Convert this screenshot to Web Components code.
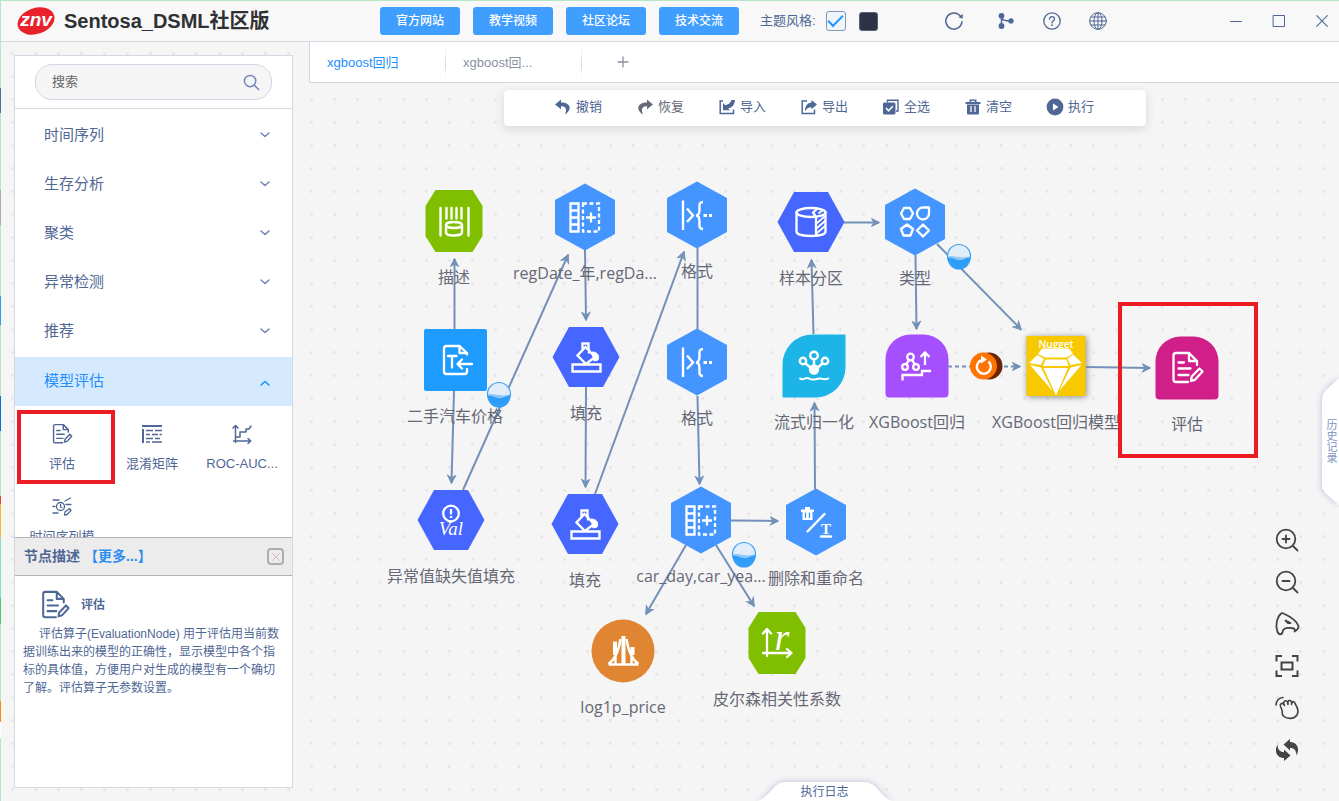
<!DOCTYPE html>
<html lang="zh-CN">
<head>
<meta charset="utf-8">
<title>Sentosa_DSML社区版</title>
<style>
html,body{margin:0;height:100%}
body{font-family:"Liberation Sans","Noto Sans CJK SC",sans-serif;color:#4f6795;overflow:hidden;
 --line:#d4d8e2;--ink:#4f6795;--blue:#1e8fff;--mark:#ec1c24}
</style>
</head>
<body>
<app-shell></app-shell>
<script>
const SW = 'fill="none" stroke="currentColor" stroke-linecap="round" stroke-linejoin="round"';
/* name: [viewBox, markup] */
const ICONS = {
  search:['0 0 18 18',`<g ${SW} stroke-width="1.6"><circle cx="7.500" cy="7.500" r="6"/><path d="M12 12l4.500 4.500"/></g>`],
  down:['0 0 12 12',`<path ${SW} stroke-width="1.600" d="M2 4L6 7.500L10 4"/>`],
  up:['0 0 12 12',`<path ${SW} stroke-width="1.600" d="M2 8L6 4.500L10 8"/>`],
  close:['0 0 12 12',`<path ${SW} stroke-width="1.1" d="M.7 .7L11.300 11.300M11.300 .7L.7 11.300"/>`],
  max:['0 0 12 12',`<path ${SW} stroke-width="1" d="M.5 .5H11.500V11.500H.5Z"/>`],
  min:['0 0 12 12',`<path ${SW} stroke-width="1" d="M.5 6.500H11.500"/>`],
  plus:['0 0 12 12',`<path ${SW} stroke-width="1.300" d="M6 1V11M1 6H11"/>`],
  refresh:['0 0 18 18',`<path ${SW} stroke-width="1.500" d="M17 9.800A8.100 8.100 0 1 1 15.600 4.400"/><path fill="currentColor" d="M17.700 1.800V6.500L13.500 5.500Z"/>`],
  branch:['0 0 18 18',`<g fill="currentColor"><circle cx="4.500" cy="3.800" r="2.900"/><circle cx="4.500" cy="14" r="2.900"/><circle cx="14" cy="8.900" r="2.600"/></g><path ${SW} stroke-width="1.500" d="M4.500 4V14M4.500 6C6 8.500 8 8.900 14 8.900"/>`],
  help:['0 0 18 18',`<g ${SW} stroke-width="1.300"><circle cx="9" cy="9" r="8.200"/><path d="M6.500 7.200C6.500 3.800 11.700 4 11.500 7.100C11.400 8.800 9 8.900 9 11"/></g><circle cx="9" cy="13.200" r=".9" fill="currentColor"/>`],
  globe:['0 0 18 18',`<g ${SW} stroke-width="1"><circle cx="9" cy="9" r="8.300"/><ellipse cx="9" cy="9" rx="4" ry="8.300"/><path d="M9 .7V17.300M.7 9H17.300M2 5H16M2 13H16"/></g>`],
  undo:['0 0 16 16',`<path fill="currentColor" d="M6 .5L0 5.500L6 10.300V7.200C10.500 7.200 12.500 9.800 10 15.500C17 11 16.500 3.500 6 3.400Z"/>`],
  redo:['0 0 16 16',`<path fill="currentColor" d="M10 .5L16 5.500L10 10.300V7.200C5.500 7.200 3.500 9.800 6 15.500C-1 11 -.5 3.500 10 3.400Z"/>`],
  import:['0 0 16 16',`<path fill="none" stroke="currentColor" stroke-width="1.500" d="M4 2H1.200V14.500H14.500V10.500"/><path fill="currentColor" d="M4 11.300V4L6.200 6.200C9.500 5.500 11.500 4 12.500 1H16C15.500 6 13 9 9 9.300L11 11.300Z"/>`],
  export:['0 0 16 16',`<path fill="none" stroke="currentColor" stroke-width="1.500" d="M6 2H1.200V14.500H13.500V10.500"/><path fill="currentColor" d="M16 5.500L10.500 1V3.500C6.500 4 4 7 4 12C5.500 9.500 7.500 8.300 10.500 8.200V10.300Z"/>`],
  all:['0 0 16 16',`<path fill="none" stroke="currentColor" stroke-width="1.400" d="M4.500 3.500V1.300H15V12H13"/><rect y="3.500" width="12.500" height="12" rx="1.500" fill="currentColor"/><path d="M3 9L5.500 11.800L9.800 7.200" fill="none" stroke="#fff" stroke-width="1.500"/>`],
  trash:['0 0 16 16',`<path fill="currentColor" d="M.5 3H4.500V.5H11.500V3H15.500V5H.5Z"/><path stroke="#fff" stroke-width="1" d="M6 2.400H10"/><path fill="currentColor" d="M2 5.500H14V14.500Q14 15.500 13 15.500H3Q2 15.500 2 14.500Z"/><path stroke="#fff" stroke-width="1.300" d="M6 7V13M10 7V13"/>`],
  run:['0 0 16 16',`<circle cx="8" cy="8" r="8.400" fill="currentColor"/><path fill="#fff" d="M6 4.500L11.500 8L6 11.500Z"/>`],
  doc:['-16 -16 32 32',`<g ${SW} stroke-width="2.300"><path d="M1 14H-11a2.500 2.500 0 0 1-2.500-2.500V-12.500A2.500 2.500 0 0 1-11-15H2L10-7V-3M2-15V-7H10M-8.500-5.500H-3M-8.500 .5H3.500M-8.500 7H1.500"/><path d="M4 13L4.800 8.500L12.500 .5L15.500 3.500L8 11.800Z"/></g>`],
  matrix:['0 0 20 20',`<g fill="none" stroke="currentColor"><path stroke-width="2" d="M0 2H20M1 5V19"/><path stroke-width="1.300" d="M4 6.500H11M13 6.500H20M4 10.500H8M10 10.500H16M17.500 10.500H20M4 14.500H11M13 14.500H18M4 18H8M10 18H20"/></g>`],
  roc:['0 0 20 20',`<g ${SW} stroke-width="1.500"><path d="M3.500 18.500V2M1 4L3.500 1.500L6 4M1.500 17H18.500M16 14.500L18.700 17L16 19.500"/><path d="M4 13H8V8H14V5H17L19 2"/></g>`],
  time:['0 0 20 20',`<g ${SW} stroke-width="1.300"><circle cx="8.500" cy="9.500" r="4"/><path d="M8.500 7.500V10L10 10.500M1 3H7M13 4L18.500 1M1 9.500H3M14 7.500H19M1 16H6M12.500 18L13 15L17.500 11.500L19 13.500L15 17.500Z"/></g>`],
  zoomin:['0 0 24 24',`<g ${SW} stroke-width="1.800"><circle cx="11" cy="11" r="9.300"/><path d="M18 18L22.500 22.500M7.500 11H14.500M11 7.500V14.500"/></g>`],
  zoomout:['0 0 24 24',`<g ${SW} stroke-width="1.800"><circle cx="11" cy="11" r="9.300"/><path d="M18 18L22.500 22.500M7.500 11H14.500"/></g>`],
  pointer:['0 0 24 24',`<g ${SW} stroke-width="1.800"><path d="M6 1.500C2 5 0 13 2.500 20C4 23 7 23 7.500 20C8 16.500 12 15.500 16 16C19 16 21 17.500 19.500 19.500C21.500 18.500 23.500 16 23.500 14C22 9.500 15 4.500 8 1.300Q7 .8 6 1.500Z"/><path d="M10.500 8.500L15.500 11L13 11Z"/></g>`],
  fit:['0 0 24 24',`<g fill="none" stroke="currentColor" stroke-width="2"><path d="M1.500 7.500V2H7M17 2H22.500V7.500M22.500 16.500V22H17M7 22H1.500V16.500"/><path d="M6.500 8.500H17.500V15.500H6.500Z"/></g>`],
  hand:['0 0 24 24',`<g ${SW} stroke-width="1.600"><path d="M1 9C1 5 4 1.500 8 1.500"/><path d="M7 14L5.500 10.500C4.500 8 7 6.500 8.500 8L9.500 9.500L8.500 7C9 4.500 11.500 4 12.500 6L13 8.500V6C13.500 3.800 16 4 16.500 6V8.500L17 6.500C18 5 20 5.500 20 7.500C23 12 24 15.500 22 19C19 23.500 12 23 9 20.500C5.500 18 8 16 7 14Z"/></g>`],
  cycle:['0 0 24 24',`<path fill="currentColor" d="M8.500 6.500L15 1V4C21.500 4 25.500 10 21.500 17.500C21.500 13 19.500 10 15 9.800V12.500ZM15.500 17.500L9 23V20C2.500 20 -1.500 14 2.500 6.500C2.500 11 4.500 14 9 14.200V11.500Z"/>`]
};
/* drawings on the canvas nodes, centred on 0,0 */
const GLYPHS = {
  doc: ICONS.doc[1],
  describe:`<g ${SW} stroke-width="2.400"><path d="M-13.500-13V14.500M14.500-13V14.500"/><path d="M-7.500-13V-2.500M-2.500-13V-2.500M2.500-13V-2.500M7.500-13V-2.500"/><ellipse cx="0" cy="4" rx="8" ry="3"/><path d="M-8 4V11.500C-8 15.500 8 15.500 8 11.500V4"/></g>`,
  columns:`<g fill="none" stroke="#fff" stroke-width="2.300"><path d="M-14.500-13.500H-6.500V14.500H-14.500ZM-14.500-6.500H-6.500M-14.500 .5H-6.500M-14.500 7.500H-6.500"/><path stroke-dasharray="4 2.500" d="M-2-13.500H14V14.500H-2Z"/><path d="M6-4.500V5.500M1 .5H11"/></g>`,
  format:`<g fill="none" stroke="#fff" stroke-width="2.400"><path d="M-14-14.500V15M-10-6.500L-4 .5L-10 7M6-13C1.500-13 2.500-9 2.500-5.500C2.500-2 1.500 .5-1 .5C1.500 .5 2.500 3 2.500 6.500C2.500 10 1.500 14 6 14"/><path stroke-width="3" d="M6.500 .5H10M12 .5H15"/></g>`,
  sample:`<g ${SW} stroke-width="2.300"><ellipse cx="0" cy="-9.500" rx="14.500" ry="4.500"/><path d="M-14.500-9.500V9.500C-14.500 15.500 14.500 15.500 14.500 9.500V-9.500M5-5V13.500M5-5L2-9.500L6-13"/><path stroke-width="1.800" d="M6 1L13-5M6 6L14-1M6 11L14 4M8-9L12-12"/></g>`,
  types:`<g ${SW} stroke-width="2.300"><path d="M-11-14H-5L-2-8.500L-5-3H-11L-14-8.500ZM8-14.500A6 6 0 1 0 14-8.500V-14.500ZM-8 2.500L-2 7L-4.500 13.500H-11.500L-14 7ZM8 2.500L14 8.500L8 14.500L2 8.500Z"/></g>`,
  input:`<g ${SW} stroke-width="2.300"><path d="M12-7V-5.500M12 9V11.500Q12 14 9.500 14H-8.500Q-11 14-11 11.500V-11.500Q-11-14 -8.500-14H4.500L12-7H4.500V-14M17 4H2.500M7-.5L2.500 4L7 8.500M-7-4H1.500M-3-4V7.500"/></g>`,
  fill:`<g fill="none" stroke="#fff" stroke-width="2.400"><path d="M-13.500 7.500H14.500V14.500H-13.500ZM-3.500-6V-13.500H2.500V-6M-.5-10L9 0L0 7L-8.500-1.500ZM3-8V-3.500"/><path fill="#fff" stroke-width="1" d="M6-5C11-5 14-2 12 3L8 4Z"/></g>`,
  norm:`<g fill="none" stroke="#fff" stroke-width="2.400"><circle cx="0" cy="-10.500" r="3.800"/><circle cx="-11" cy="-5" r="3.200"/><circle cx="11" cy="-5" r="3.200"/><path d="M0-6V3M-8.500-2.500L-3 2M8.500-2.500L3 2"/><circle cx="0" cy="3.500" r="4" fill="#fff"/><path stroke-width="2" d="M-14.500 12C-11 16-8.500 10-5 12.500S2 13 5 12.500S11 15 15 12"/></g>`,
  boost:`<g fill="none" stroke="#fff" stroke-width="2.300"><circle cx="-6.500" cy="-9" r="3.300"/><circle cx="-12" cy="1" r="2.800"/><circle cx="-1" cy="1" r="2.800"/><path d="M-8-6L-11-1.500M-5-6L-2-1.500"/><path d="M-14.500 14.500V9H5V5H14M8-1V-13M3.500-9L8-13.500L12.500-9"/></g>`,
  value:`<g fill="none" stroke="#fff" stroke-width="2.300"><circle cx="0" cy="-6.500" r="7.800"/><path d="M0-11V-5.500M0-4V-2"/></g><text y="15" text-anchor="middle" font-family="Liberation Serif,serif" font-style="italic" font-size="19" fill="#fff">Val</text>`,
  rename:`<path fill="#fff" d="M-15-12.500H-11V-15H-6V-12.500H-2V-10H-3.500V-2H-13.500V-10H-15Z"/><path stroke="#4495ff" stroke-width="1.300" d="M-10.500-9.500V-4M-6.500-9.500V-4"/><path stroke="#fff" stroke-width="2.400" stroke-linecap="round" d="M8.500-8L-8.500 9.500M5 14.500H15"/><text x="10" y="12" text-anchor="middle" font-family="Liberation Serif,serif" font-weight="bold" font-size="15" fill="#fff">T</text>`,
  log:`<g fill="none" stroke="#fff" stroke-width="2.400"><path stroke-width="4" d="M-8-9.500V4M.5-15V13M9.500-4V4"/><path d="M-14.500 13.500H15.500M-14.500 13C-7 8-4-2-2.500-12M15.500 13C8 8 5-2 3.500-12M-7.500 5V13M8.500 5V13"/></g>`,
  corr:`<g ${SW} stroke-width="2.300"><path d="M-10 13V-13.500M-14-9.500L-10-14L-6-9.500M-14 10H14M10 6L14.500 10L10 14"/></g><text x="5" y="7" text-anchor="middle" font-family="Liberation Serif,serif" font-style="italic" font-size="38" fill="#fff">r</text>`,
  gem:`<text y="-18" text-anchor="middle" font-family="Open Sans,sans-serif" font-weight="600" font-size="10" fill="#fff">Nugget</text><path fill="#fff" d="M-14-17.500H13L17-12.500L11-8.500H-11L-18-12Z M-18.500-11L-12-7L-15-1L-27-3Z M-10.500-6.500H10.500L12.500 0H-13Z M17-11.500L26-3L14.500-1L11.500-7Z M-26-1L-15 1.500L-3.500 25Z M-12.500 2H12L0 29.500Z M14.500 1.500L25.500-1L3 25Z"/>`
};
const SHAPES = {
  octagon:'<path d="M-18.500-31H18.500L28.500-15V15L18.500 31H-18.500L-28.500 15V-15Z"/>',
  hex:'<path d="M0-33.500L30-17V17L0 33.500L-30 17V-17Z"/>',
  flat:'<path d="M-33.500 0L-17-30H17L33.500 0L17 30H-17Z"/>',
  square:'<rect x="-31" y="-31" width="63" height="62" rx="2"/>',
  leaf:'<path d="M-31.500 31.500V-1.500A30 30 0 0 1-1.500-31.500H31.500V1.500A30 30 0 0 1 1.500 31.500Z"/>',
  arch:'<path d="M-31.500-6.500A25 25 0 0 1-6.500-31.500H6.500A25 25 0 0 1 31.500-6.500V27.500A4 4 0 0 1 27.500 31.500H-27.500A4 4 0 0 1-31.500 27.500Z"/>',
  card:'<rect x="-29.500" y="-30" width="59" height="60"/>',
  circle:'<circle r="31.500"/>'
};
const define = (name, html, setup) => {
  const t = document.createElement('template');
  t.innerHTML = html;
  customElements.define(name, class extends HTMLElement {
    constructor(){ super(); this.attachShadow({mode:'open'}).append(t.content.cloneNode(true)); }
    connectedCallback(){ if(setup && !this.ready){ this.ready = true; setup.call(this, this.shadowRoot); } }
  });
};

define('ui-icon', `<style>:host{display:inline-flex;width:var(--s,16px);height:var(--s,16px);flex:none}svg{width:100%;height:100%;overflow:visible;display:block}</style><svg aria-hidden="true"></svg>`, function(r){
  const [vb, body] = ICONS[this.getAttribute('name')];
  const s = r.querySelector('svg'); s.setAttribute('viewBox', vb); s.innerHTML = body;
});

define('app-header', `<style>
:host{display:flex;align-items:center;height:40px;background:#f8f8f8;border-bottom:1px solid var(--line);padding-left:15px}
.brand{display:flex;align-items:center;gap:8px;width:364px;flex:none}
h1{margin:0;font-size:20px;line-height:24px;color:#303133;white-space:nowrap}
nav{display:flex;gap:13px}
nav button{width:80px;height:28px;border:0;border-radius:3px;background:#409eff;color:#fff;font:500 12px/28px "Liberation Sans","Noto Sans CJK SC",sans-serif;padding:0}
.theme{display:flex;align-items:center;margin-left:21px;font-size:13px;gap:10px;white-space:nowrap}
label{padding-bottom:3px}
input{appearance:none;margin:0;width:20px;height:20px;box-sizing:border-box;border:1px solid #8296b8;border-radius:3px;background:#f0f5fc;display:grid;place-items:center}
input:checked::after{content:"";box-sizing:border-box;width:15px;height:8px;border:solid #2196ff;border-width:0 0 2px 2px;transform:translateY(-2px) rotate(-45deg)}
.dark{width:19px;height:19px;border:1px solid #56617a;border-radius:3px;background:#2b3345;padding:0;margin-left:3px}
.tools{display:flex;gap:28px;margin-left:67px}
.win{display:flex;gap:31px;margin-left:auto;padding-right:11px}
.tools button,.win button{border:0;background:none;padding:0;color:inherit;display:flex}
.tools button:first-child{margin-right:6px}
.tools ui-icon{--s:18px}.win ui-icon{--s:12px}
</style>
<div class="brand"><svg width="40" height="30" viewBox="0 0 40 30" role="img" aria-label="znv"><ellipse cx="20" cy="15" rx="19" ry="13" transform="rotate(-18 20 15)" fill="#e8222c"/><text x="20" y="20" text-anchor="middle" font-family="Liberation Sans,sans-serif" font-weight="bold" font-style="italic" font-size="19" fill="#fff">znv</text></svg><h1>Sentosa_DSML社区版</h1></div>
<nav><button>官方网站</button><button>教学视频</button><button>社区论坛</button><button>技术交流</button></nav>
<div class="theme"><label for="light">主题风格:</label><input id="light" type="checkbox" checked><button class="dark" aria-label="深色"></button></div>
<div class="tools"><button aria-label="刷新"><ui-icon name="refresh"></ui-icon></button><button aria-label="分支"><ui-icon name="branch"></ui-icon></button><button aria-label="帮助"><ui-icon name="help"></ui-icon></button><button aria-label="语言"><ui-icon name="globe"></ui-icon></button></div>
<div class="win"><button aria-label="最小化"><ui-icon name="min"></ui-icon></button><button aria-label="最大化"><ui-icon name="max"></ui-icon></button><button aria-label="关闭"><ui-icon name="close"></ui-icon></button></div>`);

define('menu-row', `<style>:host{display:block}
button{display:flex;width:100%;height:49px;align-items:center;justify-content:space-between;border:0;background:none;color:inherit;font:inherit;font-size:15px;line-height:20px;padding:0 21px 4px 29px}
ui-icon{--s:12px;color:#7486b8}
:host([open]) button{background:#d6eaff;color:var(--blue);padding-bottom:2px}:host([open]) ui-icon{color:inherit;margin-top:4px}</style>
<button><slot></slot></button>`, function(r){
  const open = this.hasAttribute('open');
  const b = r.querySelector('button');
  b.setAttribute('aria-expanded', open);
  const i = document.createElement('ui-icon'); i.setAttribute('name', open ? 'up' : 'down');
  b.append(i);
});

define('tool-item', `<style>:host{display:block;position:relative}
button{display:flex;flex-direction:column;align-items:center;gap:11px;width:100%;height:73px;border:0;background:none;color:inherit;font:inherit;font-size:13px;line-height:18px;padding:18px 0 0;white-space:nowrap}
::slotted(ui-icon){--s:20px}
:host([marked])::after{content:"";position:absolute;left:0;top:4px;right:-8px;height:66px;border:4px solid var(--mark)}</style>
<button><slot name="icon"></slot><slot></slot></button>`);

define('node-info', `<style>
:host{display:flex;flex-direction:column;border-top:1px solid #b4b4b4;background:#fff}
header{display:flex;align-items:center;height:37px;background:#ececec;border-bottom:1px solid #b4b4b4;padding:0 8px 0 9px;font-size:14px;font-weight:bold}
header span,a{padding-bottom:3px}
a{color:#2f8cf0;text-decoration:none;margin-left:4px}
header button{margin-left:auto;width:17px;height:17px;border:2px solid #adadad;border-radius:4px;background:none;padding:0;display:grid;place-items:center;color:#d3a9a9}
header ui-icon{--s:8px}
h2{display:flex;align-items:center;gap:12px;margin:15px 0 6px 26px;font-size:12px;line-height:26px}
h2 ui-icon{--s:28px}
p{margin:0;padding:0 8px;text-indent:16px;font-size:12px;line-height:18px}
</style>
<header><span>节点描述</span><a href="#more">【更多...】</a><button aria-label="关闭"><ui-icon name="close"></ui-icon></button></header>
<h2><ui-icon name="doc"></ui-icon>评估</h2>
<p>评估算子(EvaluationNode) 用于评估用当前数据训练出来的模型的正确性，显示模型中各个指标的具体值，方便用户对生成的模型有一个确切了解。评估算子无参数设置。</p>`);

define('side-bar', `<style>
:host{display:flex;flex-direction:column;background:#fff;border:1px solid var(--line);min-height:0}
.search{padding:8px 20px;border-bottom:1px solid var(--line)}
.box{display:flex;align-items:center;height:34px;border:1px solid #d3d7e6;border-radius:17px;background:#f5f5f5;padding:0 11px 0 16px;color:#7486b8}
.box ui-icon{--s:17px}
input{flex:1;min-width:0;border:0;background:none;outline:0;font:inherit;font-size:13px;padding:0 0 2px;color:#666}
input::placeholder{color:#666;opacity:1}
.list{flex:1;min-height:0;overflow:hidden;padding-top:3px}
.grid{display:grid;grid-template-columns:repeat(3,90px);padding-left:2px}
node-info{flex:0 0 249px}
</style>
<div class="search"><div class="box"><input type="text" placeholder="搜索" aria-label="搜索"><ui-icon name="search"></ui-icon></div></div>
<div class="list"><menu-row>时间序列</menu-row><menu-row>生存分析</menu-row><menu-row>聚类</menu-row><menu-row>异常检测</menu-row><menu-row>推荐</menu-row><menu-row open>模型评估</menu-row>
<div class="grid"><tool-item marked><ui-icon slot="icon" name="doc"></ui-icon>评估</tool-item><tool-item><ui-icon slot="icon" name="matrix"></ui-icon>混淆矩阵</tool-item><tool-item><ui-icon slot="icon" name="roc"></ui-icon>ROC-AUC...</tool-item><tool-item><ui-icon slot="icon" name="time"></ui-icon>时间序列模</tool-item></div></div>
<node-info></node-info>`);

define('tab-strip', `<style>
:host{display:flex;height:40px;background:#fff;border:1px solid var(--line);border-width:0 0 1px 1px;font-size:13px}
button{border:0;background:none;font:inherit;text-align:left;padding:0 0 2px 17px;width:136px;color:#8b93a1;background:linear-gradient(#fff,#ccd6ea 60%,#fff) right 5px/1px 30px no-repeat}
button[aria-selected=true]{color:var(--blue)}
button.add{width:82px;padding:0;display:grid;place-items:center;background:none}
button.add ui-icon{--s:12px}
:host div{display:flex}
</style><div role="tablist"><button role="tab" aria-selected="true">xgboost回归</button><button role="tab">xgboost回...</button></div><button class="add" aria-label="新建"><ui-icon name="plus"></ui-icon></button>`);

define('tool-bar', `<style>
:host{display:flex;justify-content:center;gap:35px;background:#fff;border-radius:4px;box-shadow:0 3px 10px rgba(60,60,80,.16);height:36px;box-sizing:border-box;padding-bottom:2px}
button{display:flex;align-items:center;gap:5px;border:0;background:none;padding:0;font:inherit;font-size:13px;line-height:16px;color:inherit;white-space:nowrap}
.off{color:#666a7a}
</style><button><ui-icon name="undo"></ui-icon>撤销</button><button class="off"><ui-icon name="redo"></ui-icon>恢复</button><button><ui-icon name="import"></ui-icon>导入</button><button><ui-icon name="export"></ui-icon>导出</button><button><ui-icon name="all"></ui-icon>全选</button><button><ui-icon name="trash"></ui-icon>清空</button><button><ui-icon name="run"></ui-icon>执行</button>`);

define('flow-node', `<style>
:host{position:absolute;width:0;height:0}
svg{position:absolute;left:-36px;top:-36px;width:72px;height:72px;overflow:visible;color:#fff}
span{position:absolute;top:44px;left:0;transform:translateX(-50%);white-space:nowrap;font:16px/24px "Open Sans","Noto Sans CJK SC",sans-serif;color:#666876}
.card{filter:drop-shadow(1px 1px 3px #888)}
</style><svg viewBox="-36 -36 72 72" aria-hidden="true"></svg><span><slot></slot></span>`, function(r){
  const a = n => this.getAttribute(n);
  this.style.left = a('x') + 'px'; this.style.top = a('y') + 'px';
  r.querySelector('svg').innerHTML = `<g fill="${a('color')}" class="${a('shape')}">${SHAPES[a('shape')]}</g>${GLYPHS[a('glyph')]}`;
});

define('flow-canvas', `<style>
:host{display:block;position:relative;overflow:hidden;flex:1;min-height:0;margin-left:1px}
.world{position:absolute;left:-310px;top:-83px;width:0;height:0}
.links{position:absolute;left:0;top:0;width:1340px;height:801px;overflow:visible}
.links path{fill:none;stroke:#7391b8;stroke-width:2}
.links .dash{stroke-dasharray:4 3}
.over{pointer-events:none}
.mark{position:absolute;box-sizing:border-box;left:1118px;top:302px;width:140px;height:156px;border:4px solid var(--mark)}
tool-bar{position:absolute;top:7px;left:50%;transform:translateX(-50%);width:642px}
.view{position:absolute;right:40px;bottom:39px;display:grid;gap:18px;color:#444}
.view button{border:0;background:none;padding:0;color:inherit;display:flex}
.view ui-icon{--s:24px}
.drawer{position:absolute;border:0;background:none;padding:0;font:inherit;color:#4f6795}
.drawer svg{position:absolute;left:0;top:0;overflow:visible;filter:drop-shadow(0 0 3px #b9bcd8)}
.drawer span{position:relative}
.log{bottom:0;left:50%;transform:translateX(-50%);width:134px;height:20px;font-size:12px;line-height:22px}
.his{right:0;top:295px;width:18px;height:128px;color:#7f92c2}
.his span{display:block;width:12px;margin-left:5px;font-size:11px;line-height:11px;word-break:break-all}
</style>
<div class="world">
<svg class="links" aria-hidden="true"><defs><marker id="a" viewBox="0 0 10 10" refX="8.500" refY="5" markerWidth="10" markerHeight="10" markerUnits="userSpaceOnUse" orient="auto"><path style="fill:#7391b8;stroke:#7391b8;stroke-width:1" d="M1 1L9 5L1 9L3.500 5Z"/></marker></defs><g id="l"></g></svg>
<flow-node x="454" y="221" shape="octagon" color="#7fbf00" glyph="describe">描述</flow-node>
<flow-node x="585" y="217" shape="hex" color="#4495ff" glyph="columns">regDate_年,regDa...</flow-node>
<flow-node x="697" y="215" shape="hex" color="#4495ff" glyph="format">格式</flow-node>
<flow-node x="811" y="222" shape="flat" color="#4566ff" glyph="sample">样本分区</flow-node>
<flow-node x="915" y="222" shape="hex" color="#4495ff" glyph="types">类型</flow-node>
<flow-node x="455" y="360" shape="square" color="#1e9bff" glyph="input">二手汽车价格</flow-node>
<flow-node x="586" y="357" shape="flat" color="#4566ff" glyph="fill">填充</flow-node>
<flow-node x="697" y="362" shape="hex" color="#4495ff" glyph="format">格式</flow-node>
<flow-node x="814" y="366" shape="leaf" color="#1db5e8" glyph="norm">流式归一化</flow-node>
<flow-node x="917" y="366" shape="arch" color="#a64fff" glyph="boost">XGBoost回归</flow-node>
<flow-node x="1056" y="366" shape="card" color="#f8c800" glyph="gem">XGBoost回归模型</flow-node>
<flow-node x="1187" y="368" shape="arch" color="#d01f88" glyph="doc">评估</flow-node>
<flow-node x="451" y="520" shape="flat" color="#4566ff" glyph="value">异常值缺失值填充</flow-node>
<flow-node x="585" y="524" shape="flat" color="#4566ff" glyph="fill">填充</flow-node>
<flow-node x="701" y="520" shape="hex" color="#4495ff" glyph="columns">car_day,car_yea...</flow-node>
<flow-node x="816" y="522" shape="hex" color="#4495ff" glyph="rename">删除和重命名</flow-node>
<flow-node x="623" y="651" shape="circle" color="#e08633" glyph="log">log1p_price</flow-node>
<flow-node x="777" y="643" shape="octagon" color="#7fbf00" glyph="corr">皮尔森相关性系数</flow-node>
<svg class="links over" aria-hidden="true"><g id="drops"></g>
<circle cx="989" cy="366" r="13.500" fill="#6b2500"/><circle cx="983.500" cy="366" r="13.500" fill="#ff7300"/><path style="stroke:#fff;stroke-width:2.400" d="M988.500 361.500A7 7 0 1 1 981 360.300"/><path style="fill:#fff;stroke:none" d="M981 355.500L987 359.500L981 363.500Z"/></svg>
<div class="mark"></div>
</div>
<tool-bar></tool-bar>
<div class="view"><button aria-label="放大"><ui-icon name="zoomin"></ui-icon></button><button aria-label="缩小"><ui-icon name="zoomout"></ui-icon></button><button aria-label="选择"><ui-icon name="pointer"></ui-icon></button><button aria-label="适应"><ui-icon name="fit"></ui-icon></button><button aria-label="拖动"><ui-icon name="hand"></ui-icon></button><button aria-label="重置"><ui-icon name="cycle"></ui-icon></button></div>
<button class="drawer his"><svg width="18" height="128"><path fill="#fff" d="M18 0L5 12Q1 16 1 22V106Q1 112 5 116L18 127Z"/></svg><span>历史记录</span></button>
<button class="drawer log"><svg width="134" height="20"><path fill="#fff" d="M0 20C8 18 14 6 20 3Q23 1 28 1H106Q111 1 114 3C120 6 126 18 134 20Z"/></svg><span>执行日志</span></button>`, function(r){
  const links = ['M454.500 330V259','M454 391L451.500 483','M463 490L568 255','M585 250L586 320','M586 387L585.500 487','M595 494L684 252','M697.500 396L699.500 484','M731 520.500L778 521','M686 545L646 614','M716 545L754 606','M815 489L814.500 403','M813.500 334L811.500 260','M844 222.500H879','M915.500 255L916.500 329','M937 244L1021 329.500','M1086 367L1150 368'];
  r.querySelector('#l').innerHTML = '<path d="M697.500 248V330"/>' + links.map(d => `<path d="${d}" marker-end="url(#a)"/>`).join('') + '<path class="dash" d="M948 366.500H1020" marker-end="url(#a)"/>';
  r.querySelector('#drops').innerHTML = [[499,394],[959,256],[744,554]].map(([x,y]) => `<g transform="translate(${x} ${y})"><circle r="11.500" fill="#dfecf8" fill-opacity=".95"/><path style="fill:#8cc8fa;stroke:none" d="M-11.500 1C-6-2 0 4 11.500 0A11.500 11.500 0 0 1-11.500 1"/><path style="fill:#2e9df8;stroke:none" d="M-11.500 2C-6 1-3 5 2 4S8 1 11.500 2A11.500 11.500 0 0 1-11.500 2"/><circle r="11.500" fill="none" stroke="#3aa0f5" stroke-width="1.200"/></g>`).join('');
});
define('app-shell', `<style>
:host{display:grid;grid-template-rows:auto 1fr;height:100vh;box-sizing:border-box;padding:1px 0 0 1px;
 background:linear-gradient(#b5e6c5,#b5e6c5) 0 0/100% 1px no-repeat,
 linear-gradient(#b5e6c5 0 88px,#3a78a8 88px 113px,#b5e6c5 113px 190px,#aaa 190px 225px,#b5e6c5 225px 296px,#2c9cf0 296px 325px,#b5e6c5 325px 396px,#0a70d8 396px 431px,#b5e6c5 431px 496px,#e8443c 496px 504px,#fbb820 504px 537px,#7fe0cc 537px 598px,#4cc870 598px 624px,#b5e6c5 624px 701px,#ff8800 701px 722px,#fff 722px 738px,#b5e6c5 738px) 0 0/1px 100% no-repeat,
 radial-gradient(circle,#e6e6e8 1px,rgba(230,230,232,0) 2px) 1px -4px/23px 23px #f5f5f5}
main{display:grid;grid-template-columns:279px minmax(0,1fr);gap:16px;padding-left:13px;min-height:0}
side-bar{margin:13px 0}
.stage{display:flex;flex-direction:column;min-height:0;min-width:0}
</style><app-header></app-header><main><side-bar></side-bar><div class="stage"><tab-strip></tab-strip><flow-canvas></flow-canvas></div></main>`);
</script>
</body>
</html>
